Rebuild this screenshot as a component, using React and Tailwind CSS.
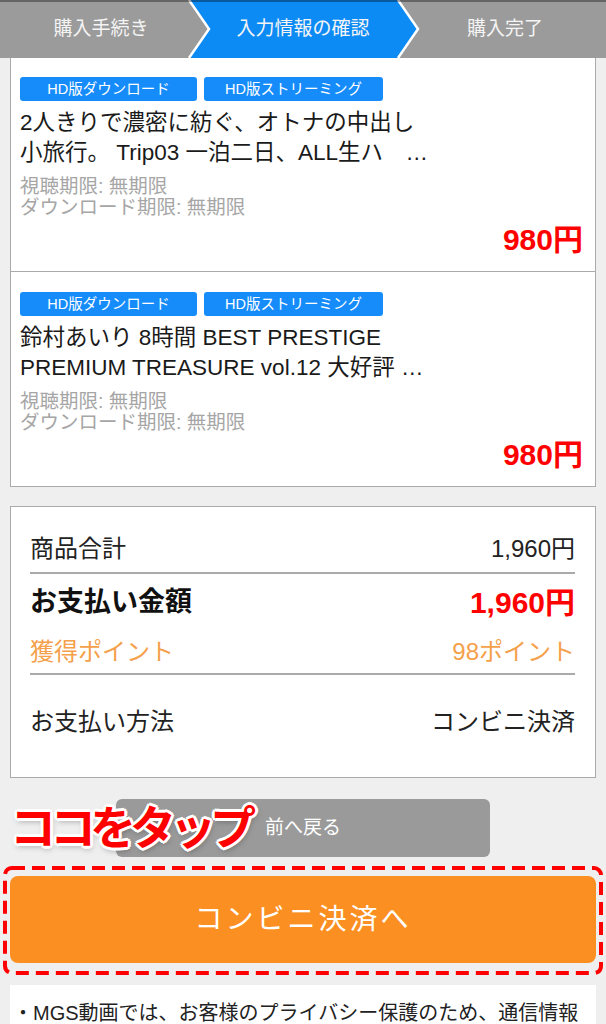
const font = { fontFamily: '"Liberation Sans", "Noto Sans CJK JP", sans-serif' };

const items = [
  {
    id: 1,
    title: ['2人きりで濃密に紡ぐ、オトナの中出し', '小旅行。 Trip03 一泊二日、ALL生ハ\u3000…'],
    price: '980円',
  },
  {
    id: 2,
    title: ['鈴村あいり 8時間 BEST PRESTIGE', 'PREMIUM TREASURE vol.12 大好評 …'],
    price: '980円',
  },
];

function Steps() {
  return (
    <div className="relative h-[58px] bg-[#9b9b9b]">
      <svg className="absolute inset-0" width="606" height="58" viewBox="0 0 606 58">
        <polygon points="189,0 209,29 189,58 398,58 418,29 398,0" fill="#0d8bf5" />
        <polyline points="189,0 209,29 189,58" fill="none" stroke="#fff" strokeWidth="2.5" />
        <polyline points="398,0 418,29 398,58" fill="none" stroke="#fff" strokeWidth="2.5" />
      </svg>
      <div className="absolute top-0 left-0 right-0 h-[2px] bg-black/35" />
      <div className="relative grid grid-cols-3 h-full items-center text-[19px] text-[#f4f4f4]">
        <div className="text-center">購入手続き</div>
        <div className="text-center">入力情報の確認</div>
        <div className="text-center">購入完了</div>
      </div>
    </div>
  );
}

function ItemCard({ item, first }) {
  return (
    <div className={`bg-white border-x border-b border-[#aaa] pl-[9px] pr-[12px] pb-[15px] ${first ? 'pt-[19px]' : 'pt-[20px]'}`}>
      <div className="flex gap-[7px]">
        <div className="w-[177px] h-[24px] rounded-[3px] bg-[#168cfb] text-white text-[14.5px] leading-[24px] text-center">HD版ダウンロード</div>
        <div className="w-[179px] h-[24px] rounded-[3px] bg-[#168cfb] text-white text-[14.5px] leading-[24px] text-center">HD版ストリーミング</div>
      </div>
      <div className="mt-[7px] text-[22.5px] leading-[30px] text-[#1a1a1a] whitespace-nowrap">
        {item.title.map((t) => (
          <div key={t}>{t}</div>
        ))}
      </div>
      <div className="mt-[8px] text-[19.5px] leading-[21px] text-[#a6a6a6]">
        <div>視聴期限: 無期限</div>
        <div>ダウンロード期限: 無期限</div>
      </div>
      <div className="mt-[6px] text-right text-[30px] leading-[32px] font-bold text-[#f00]">{item.price}</div>
    </div>
  );
}

function Summary() {
  return (
    <div className="mt-[19px] bg-white border border-[#aaa] pl-[19px] pr-[20px] pt-[19px] pb-[8px]">
      <div className="h-[46px] flex items-center justify-between text-[24px] text-[#222]">
        <span>商品合計</span>
        <span>1,960円</span>
      </div>
      <div className="h-[2px] bg-[#aaa]" />
      <div className="h-[56px] flex items-center justify-between">
        <span className="text-[27px] font-bold text-[#111]">お支払い金額</span>
        <span className="text-[30px] font-bold text-[#f00]">1,960円</span>
      </div>
      <div className="h-[43px] flex items-center justify-between text-[24px] text-[#f5a04a]">
        <span>獲得ポイント</span>
        <span>98ポイント</span>
      </div>
      <div className="h-[2px] bg-[#aaa]" />
      <div className="h-[94px] flex items-center justify-between text-[24px] text-[#222]">
        <span>お支払い方法</span>
        <span>コンビニ決済</span>
      </div>
    </div>
  );
}

export default function App() {
  return (
    <div className="w-[606px] h-[1024px] overflow-hidden bg-[#efefef]" style={font}>
      <Steps />
      <div className="px-[10px]">
        {items.map((item, i) => (
          <ItemCard key={item.id} item={item} first={i === 0} />
        ))}
        <Summary />

        <div className="relative mt-[21px] flex justify-center">
          <button className="w-[374px] h-[58px] rounded-[6px] bg-[#9a9a9a] text-white text-[19px]">前へ戻る</button>
          <div className="absolute left-[0px] top-[0px] text-[46px] font-bold leading-[58px] text-[#f00] tracking-[-6px] [text-shadow:0_0_3px_#fff,2px_2px_0_#fff,-2px_-2px_0_#fff,2px_-2px_0_#fff,-2px_2px_0_#fff,0_3px_0_#fff,0_-3px_0_#fff,3px_0_0_#fff,-3px_0_0_#fff,1px_3px_6px_rgba(0,0,0,0.35)]">
            ココをタップ
          </div>
        </div>

        <div className="relative mt-[9px] -mx-[7px] px-[7px] pt-[10px] pb-[12px]">
          <svg className="absolute inset-0" width="600" height="109" viewBox="0 0 600 109">
            <rect x="2" y="2" width="596" height="105" rx="7" fill="none" stroke="#f00" strokeWidth="4" strokeDasharray="13 7" />
          </svg>
          <button className="relative w-full h-[87px] rounded-[8px] bg-[#fb8f22] text-white text-[28px] tracking-[3px]">コンビニ決済へ</button>
        </div>

        <div className="mt-[10px] bg-white pl-[3px] pt-[15px] pb-[4px] text-[20px] leading-[26px] text-[#222] whitespace-nowrap">
          ・MGS動画では、お客様のプライバシー保護のため、通信情報
        </div>
      </div>
    </div>
  );
}
